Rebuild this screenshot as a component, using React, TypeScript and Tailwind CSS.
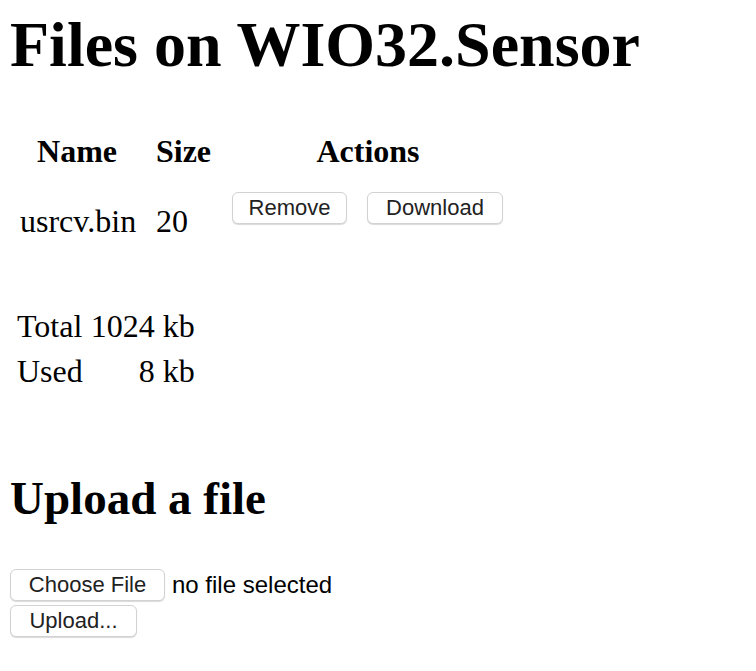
const btn =
  "h-[32px] bg-white rounded-[6px] border border-[#d2d2d2] shadow-[0_1px_1px_rgba(0,0,0,0.15)] text-[22px] leading-none text-[#222] font-['Liberation_Sans',Arial,sans-serif] text-center";

const App = () => {
  return (
    <main className="min-h-screen bg-white text-black pl-[10px] font-['Liberation_Serif','Times_New_Roman',serif]">
      <div className="flex flex-col">
        <h1 className="mt-[13px] h-[64px] text-[64px] leading-[64px] font-bold">Files on WIO32.Sensor</h1>

        {/* file table */}
        <div className="ml-[7px] grid grid-cols-[120px_59px_276px] gap-x-[17px] text-[32px]">
          <div className="mt-[56px] h-[36px] leading-[36px] font-bold text-center">Name</div>
          <div className="mt-[56px] h-[36px] leading-[36px] font-bold text-center">Size</div>
          <div className="mt-[56px] h-[36px] leading-[36px] font-bold text-center">Actions</div>

          <div className="mt-[23px] pt-[11px] leading-[36px] pl-[3px]">usrcv.bin</div>
          <div className="mt-[23px] pt-[11px] leading-[36px] pl-[2px]">20</div>
          <div className="mt-[23px] pl-[2px] flex gap-[20px] items-start">
            <button className={`${btn} w-[115px]`}>Remove</button>
            <button className={`${btn} w-[136px]`}>Download</button>
          </div>
        </div>

        {/* storage */}
        <div className="mt-[69px] ml-[7px] grid grid-cols-[auto_auto] w-fit gap-x-[8px] gap-y-[9px] text-[32px] leading-[36px]">
          <div>Total</div>
          <div className="text-right">1024 kb</div>
          <div>Used</div>
          <div className="text-right">8 kb</div>
        </div>

        <h2 className="mt-[86px] h-[47px] text-[47px] leading-[47px] font-bold">Upload a file</h2>

        <div className="mt-[47px] h-[32px] flex items-center gap-[7px]">
          <button className={`${btn} w-[155px]`}>Choose File</button>
          <span className="text-[24px] leading-[32px] font-['Liberation_Sans',Arial,sans-serif] text-black">no file selected</span>
        </div>
        <div className="mt-[4px] h-[32px]">
          <button className={`${btn} w-[127px]`}>Upload...</button>
        </div>
      </div>
    </main>
  );
};

export default App;
